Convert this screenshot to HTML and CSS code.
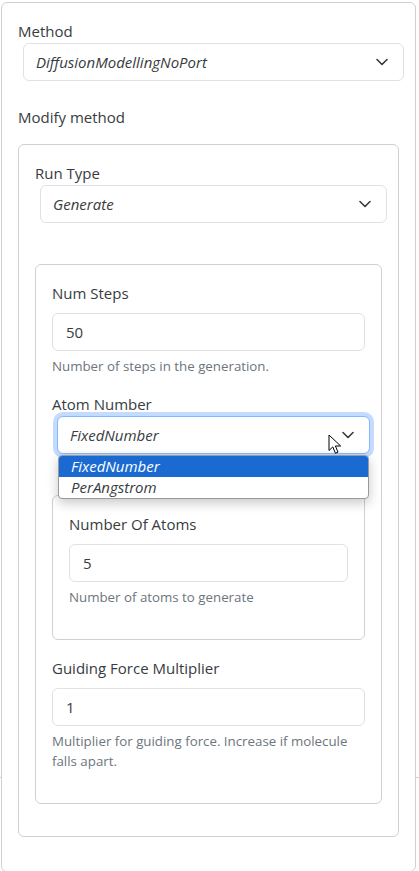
FILE: index.html
```html
<!DOCTYPE html>
<html lang="en">
<head>
<meta charset="utf-8">
<title>Method</title>
<link rel="stylesheet" href="styles.css">
</head>
<body>
<div class="panel">
  <div class="select-group">
    <div class="label">Method</div>
    <div class="select">
      <span class="value">DiffusionModellingNoPort</span>
      <svg class="chev" width="12" height="8" viewBox="0 0 12 8"><path d="M1 1.5l5 5 5-5" fill="none" stroke="#343a40" stroke-width="1.6" stroke-linecap="round" stroke-linejoin="round"/></svg>
    </div>
  </div>
  <div class="section-title">Modify method</div>
  <div class="card mid">
    <div class="select-group before-card">
      <div class="label">Run Type</div>
      <div class="select">
        <span class="value">Generate</span>
        <svg class="chev" width="12" height="8" viewBox="0 0 12 8"><path d="M1 1.5l5 5 5-5" fill="none" stroke="#343a40" stroke-width="1.6" stroke-linecap="round" stroke-linejoin="round"/></svg>
      </div>
    </div>
    <div class="card sub">
      <div class="group">
        <div class="label field-label">Num Steps</div>
        <div class="input">50</div>
        <div class="help">Number of steps in the generation.</div>
      </div>
      <div class="select-group before-card">
        <div class="label">Atom Number</div>
        <div class="select-wrap">
          <div class="select focus">
            <span class="value">FixedNumber</span>
            <svg class="chev" width="12" height="8" viewBox="0 0 12 8"><path d="M1 1.5l5 5 5-5" fill="none" stroke="#343a40" stroke-width="1.6" stroke-linecap="round" stroke-linejoin="round"/></svg>
          </div>
          <svg class="cursor" width="14" height="21" viewBox="0 0 14 21"><path d="M1 1v15.5l3.8-3.6 2.6 6.3 2.6-1.1-2.6-6.1h5.3z" fill="#fff" stroke="#000" stroke-width="1" stroke-linejoin="round"/></svg>
          <div class="dropdown">
            <div class="option selected">FixedNumber</div>
            <div class="option">PerAngstrom</div>
          </div>
        </div>
      </div>
      <div class="card sub nested">
        <div class="group">
          <div class="label field-label">Number Of Atoms</div>
          <div class="input">5</div>
          <div class="help">Number of atoms to generate</div>
        </div>
      </div>
      <div class="group">
        <div class="label field-label">Guiding Force Multiplier</div>
        <div class="input">1</div>
        <div class="help">Multiplier for guiding force. Increase if molecule falls apart.</div>
      </div>
    </div>
  </div>
</div>
</body>
</html>
```
FILE: styles.css
```css
html {
  background: #fff linear-gradient(#d0d0d0, #d0d0d0) 0 777px / 100% 1px no-repeat;
}
body {
  margin: 2px 3px 0 1px;
  font-family: "Open Sans", "Noto Sans", sans-serif;
  font-size: 15px;
  line-height: 24px;
  color: #383c41;
}
.panel {
  border: 1px solid #d0d0d0;
  border-radius: 6px;
  padding: 16px 16px 18px;
  background: #fff;
}
.card {
  border: 1px solid #d0d0d0;
  border-radius: 6px;
  padding: 16px;
  background: #fff;
}
.card.mid {
  margin-top: 15px;
  margin-bottom: 16px;
}
.card.sub {
  margin-bottom: 16px;
}
.label {
  line-height: 24px;
}
.field-label {
  margin-bottom: 8px;
}
.section-title {
  line-height: 24px;
}
.select-group {
  margin-bottom: 24px;
}
.select-group.before-card {
  margin-bottom: 41px;
}
.group {
  margin-bottom: 16px;
}
.select-wrap {
  position: relative;
}
.select {
  display: flex;
  align-items: center;
  justify-content: space-between;
  height: 38px;
  box-sizing: border-box;
  margin-left: 5px;
  margin-right: -5px;
  padding: 0 15px 0 12px;
  border: 1px solid #dee2e6;
  border-radius: 6px;
  background: #fff;
  font-style: italic;
}
.select.focus {
  border-color: #86b7fe;
  box-shadow: 0 0 0 4px rgba(13, 110, 253, 0.25);
}
.chev {
  display: block;
}
.input {
  height: 38px;
  box-sizing: border-box;
  padding: 0 13px;
  display: flex;
  align-items: center;
  border: 1px solid #dee2e6;
  border-radius: 6px;
  background: #fff;
}
.help {
  margin-top: 5px;
  font-size: 13.3px;
  line-height: 20px;
  color: #6c757d;
}
.dropdown {
  position: absolute;
  left: 6px;
  right: -4px;
  top: 39px;
  border: 1px solid #9a9a9a;
  border-radius: 4px;
  background: #fff;
  overflow: hidden;
  box-shadow: 0 4px 12px rgba(0, 0, 0, 0.22);
  z-index: 2;
  font-style: italic;
}
.option {
  height: 21px;
  line-height: 21px;
  padding-left: 12px;
}
.option.selected {
  background: #1a6ad2;
  color: #fff;
}
.cursor {
  position: absolute;
  left: 276px;
  top: 18px;
  z-index: 3;
}
```
